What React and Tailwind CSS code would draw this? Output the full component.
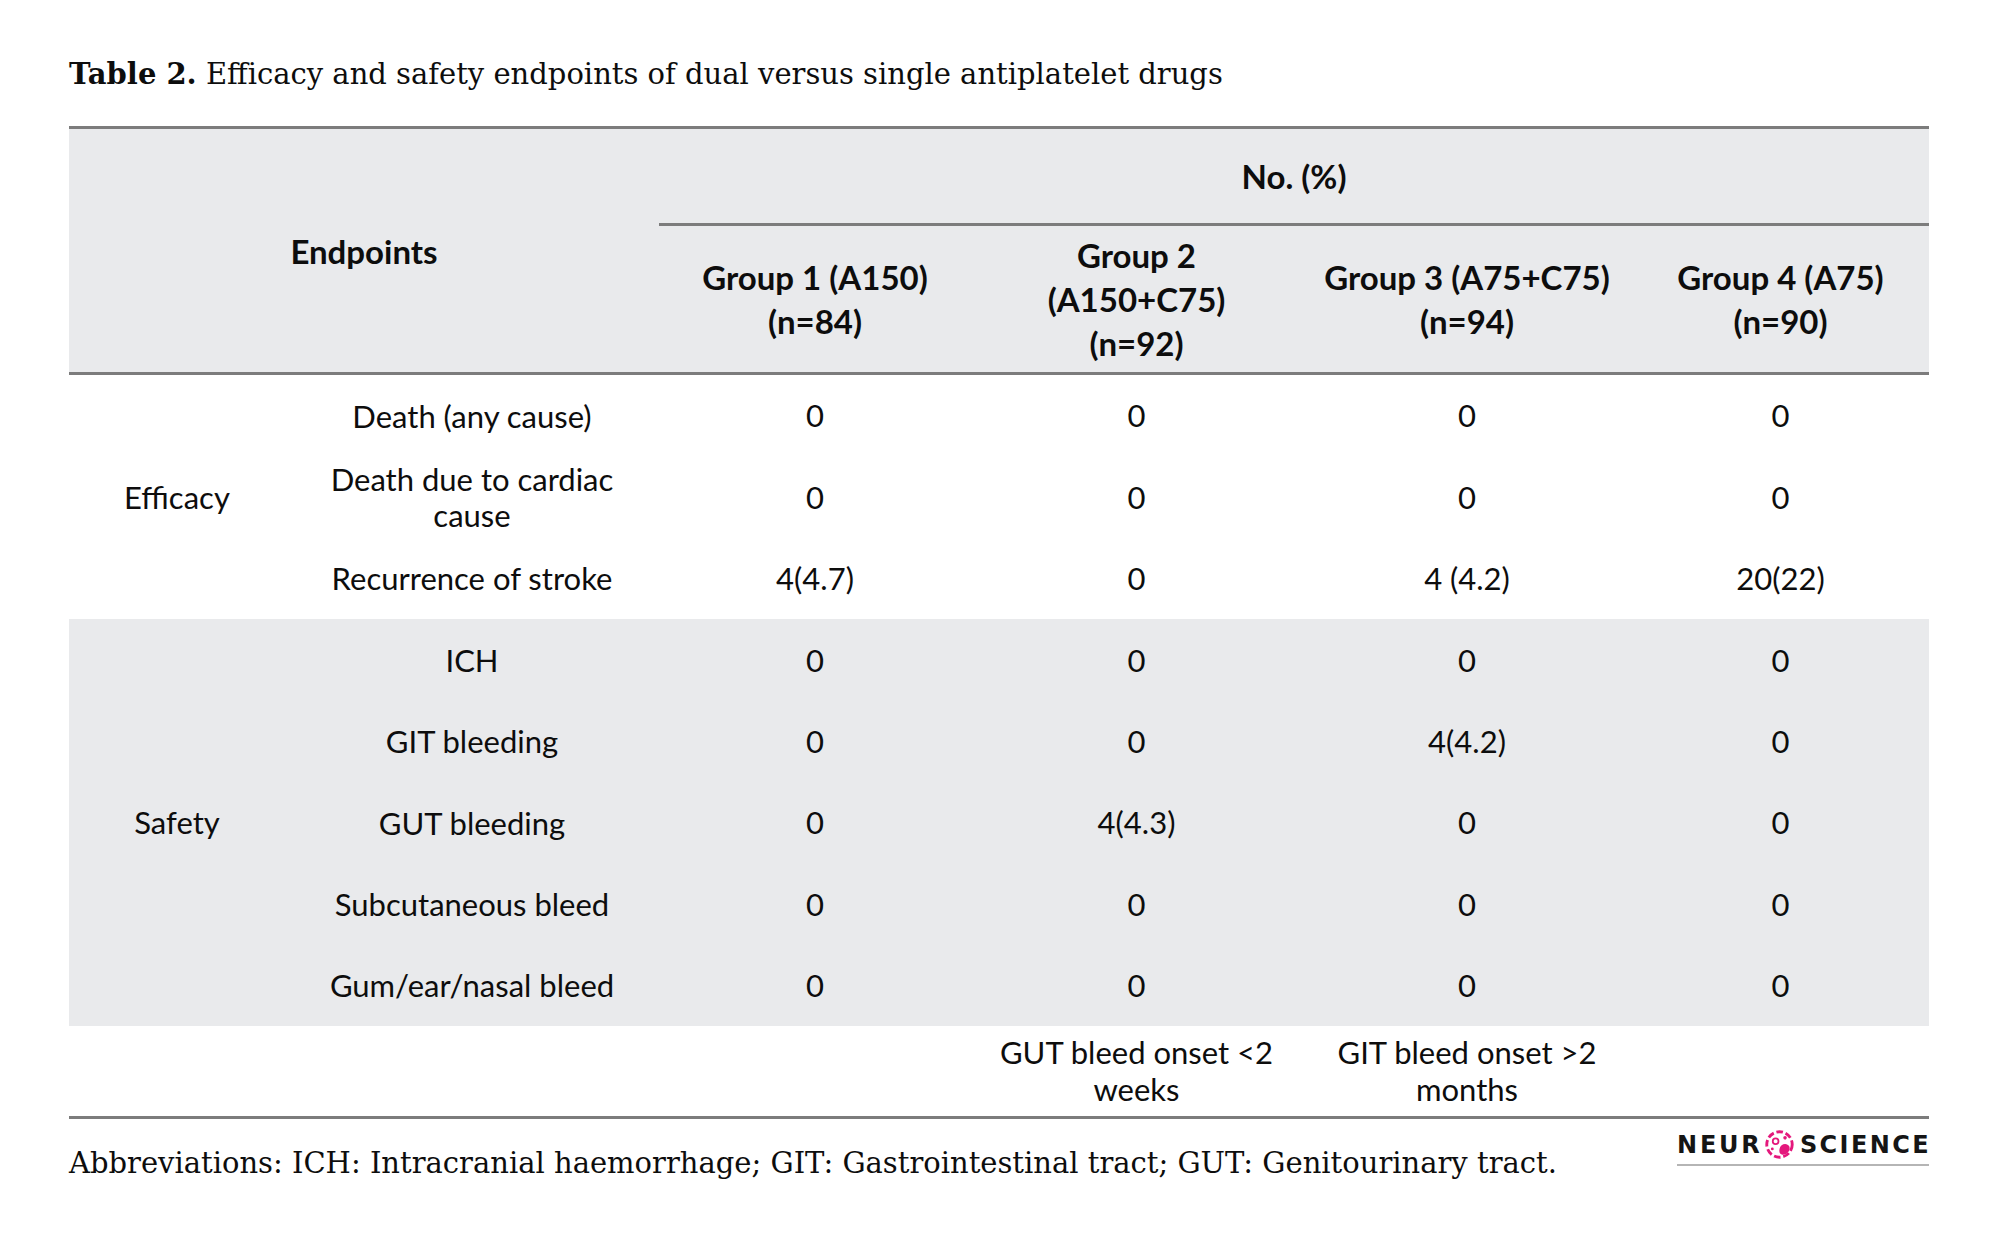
const groups = [
  ['Group 1 (A150)', '(n=84)'],
  ['Group 2', '(A150+C75)', '(n=92)'],
  ['Group 3 (A75+C75)', '(n=94)'],
  ['Group 4 (A75)', '(n=90)'],
];

const efficacy = [
  { name: ['Death (any cause)'], vals: ['0', '0', '0', '0'] },
  { name: ['Death due to cardiac', 'cause'], vals: ['0', '0', '0', '0'] },
  { name: ['Recurrence of stroke'], vals: ['4(4.7)', '0', '4 (4.2)', '20(22)'] },
];

const safety = [
  { name: ['ICH'], vals: ['0', '0', '0', '0'] },
  { name: ['GIT bleeding'], vals: ['0', '0', '4(4.2)', '0'] },
  { name: ['GUT bleeding'], vals: ['0', '4(4.3)', '0', '0'] },
  { name: ['Subcutaneous bleed'], vals: ['0', '0', '0', '0'] },
  { name: ['Gum/ear/nasal bleed'], vals: ['0', '0', '0', '0'] },
];

const cols = "grid grid-cols-[216px_374px_312px_331px_330px_297px]";
const serif = "font-['DejaVu_Serif',serif]";

function Lines({ lines }) {
  return lines.map((l, i) => <div key={i}>{l}</div>);
}

function Section({ label, rows, shaded }) {
  return (
    <div className={`${cols} ${shaded ? 'bg-[#e9eaec]' : ''}`} style={{ gridTemplateRows: `repeat(${rows.length}, 81.4px)` }}>
      <div className="flex items-center justify-center" style={{ gridColumn: 1, gridRow: `1 / span ${rows.length}` }}>{label}</div>
      {rows.map((r, i) => [
        <div key={`n${i}`} className="flex flex-col items-center justify-center text-center leading-[36px]" style={{ gridColumn: 2, gridRow: i + 1 }}>
          <Lines lines={r.name} />
        </div>,
        ...r.vals.map((v, j) => (
          <div key={`v${i}${j}`} className="flex items-center justify-center" style={{ gridColumn: j + 3, gridRow: i + 1 }}>{v}</div>
        )),
      ])}
    </div>
  );
}

function Logo() {
  return (
    <div className="flex flex-col items-stretch w-[252px]">
      <div className="flex items-center justify-between font-['DejaVu_Sans',sans-serif] font-bold text-[24px] leading-[28px] text-[#151515]">
        <span className="tracking-[2.8px]">NEUR</span>
        <svg width="31" height="31" viewBox="0 0 28 28" className="-ml-[3px]">
          <circle cx="14" cy="14" r="11.5" fill="none" stroke="#e4187c" strokeWidth="2.6" strokeDasharray="6 2.5" />
          <circle cx="10.5" cy="11" r="2.6" fill="none" stroke="#e4187c" strokeWidth="1.6" />
          <path d="M14 18 C15 13, 21 12, 23 16 C24 20, 20 24, 16 23 C14 22.5, 13.5 20, 14 18 Z" fill="#e4187c" />
          <circle cx="19" cy="8" r="1.6" fill="#e4187c" />
          <circle cx="7.5" cy="18" r="1.3" fill="#e4187c" />
        </svg>
        <span className="tracking-[2.4px] -mr-[2px]">SCIENCE</span>
      </div>
      <div className="h-[2px] bg-[#b5b5b5] mt-[4px]" />
    </div>
  );
}

export default function App() {
  return (
    <div className="w-[2000px] h-[1254px] bg-white pl-[69px] pt-[54px] text-[#0d0d0d]">
      <div className={`${serif} text-[29px] leading-[40px]`}>
        <span className="font-bold">Table 2.</span> Efficacy and safety endpoints of dual versus single antiplatelet drugs
      </div>

      <div className="w-[1860px] mt-[32px] font-['Lato',sans-serif] text-[31px]">
        {/* header */}
        <div className={`${cols} grid-rows-[97px_146px] bg-[#e9eaec] border-y-[3px] border-[#7c7c7c] font-bold text-[33px] leading-[44px]`}>
          <div className="col-span-2 row-span-2 flex items-center justify-center">Endpoints</div>
          <div className="col-span-4 flex items-center justify-center border-b-[3px] border-[#7c7c7c]">No. (%)</div>
          {groups.map((g, i) => (
            <div key={i} className="flex flex-col items-center justify-center text-center">
              <Lines lines={g} />
            </div>
          ))}
        </div>

        <Section label="Efficacy" rows={efficacy} />
        <Section label="Safety" rows={safety} shaded />

        {/* notes row */}
        <div className={`${cols} h-[93px] border-b-[3px] border-[#7c7c7c] leading-[37px]`}>
          <div />
          <div />
          <div />
          <div className="flex flex-col items-center justify-center text-center">
            <div>GUT bleed onset &lt;2</div>
            <div>weeks</div>
          </div>
          <div className="flex flex-col items-center justify-center text-center">
            <div>GIT bleed onset &gt;2</div>
            <div>months</div>
          </div>
          <div />
        </div>

        <div className="flex justify-between items-start">
          <div className={`${serif} text-[29px] leading-[40px] mt-[24px]`}>
            Abbreviations: ICH: Intracranial haemorrhage; GIT: Gastrointestinal tract; GUT: Genitourinary tract.
          </div>
          <div className="mt-[10px]">
            <Logo />
          </div>
        </div>
      </div>
    </div>
  );
}
